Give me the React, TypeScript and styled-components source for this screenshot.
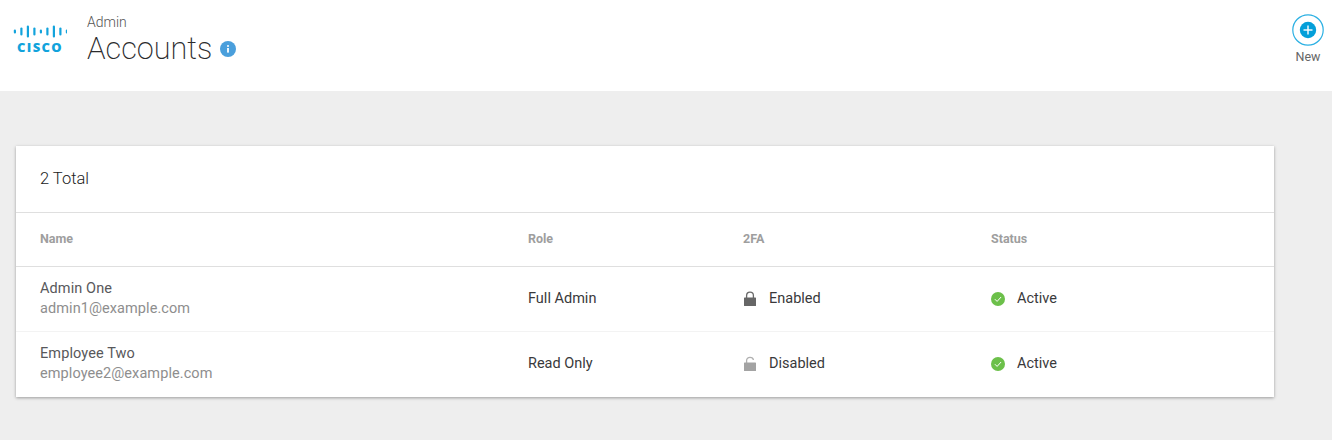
import React from "react";
import styled, { createGlobalStyle } from "styled-components";

const GlobalStyle = createGlobalStyle`
    html, body {
        margin: 0;
        padding: 0;
        background: #eeeeee;
        font-family: Roboto, "Liberation Sans", sans-serif;
        -webkit-font-smoothing: antialiased;
    }
`

type Account = {
    name: string;
    email: string;
    role: string;
    twoFactor: boolean;
}

const accounts: Account[] = [
    { name: "Admin One", email: "admin1@example.com", role: "Full Admin", twoFactor: true },
    { name: "Employee Two", email: "employee2@example.com", role: "Read Only", twoFactor: false },
]

const CiscoLogo = () => (
    <LogoWrapper>
        <svg width="54" height="14" viewBox="0 0 54 14">
            {[4, 8, 12, 8, 4, 8, 12, 8, 4].map((h, i) => (
                <rect key={i} x={0.8 + i * 6.5} y={(13 - h) / 2} width="2.2" height={h} rx="1.1" fill="#12a3dc" />
            ))}
        </svg>
        <LogoText>CISCO</LogoText>
    </LogoWrapper>
)

const InfoIcon = () => (
    <svg width="16" height="16" viewBox="0 0 16 16">
        <circle cx="8" cy="8" r="8" fill="#4a9fdc" />
        <rect x="7.1" y="7" width="1.8" height="4.6" fill="#fff" />
        <circle cx="8" cy="5" r="1" fill="#fff" />
    </svg>
)

const PlusButton = () => (
    <svg width="32" height="32" viewBox="0 0 32 32">
        <circle cx="16" cy="16" r="15.2" fill="#fff" stroke="#2bb0e3" strokeWidth="1.2" />
        <circle cx="16" cy="16" r="8.2" fill="#049fd9" />
        <rect x="15.3" y="11.5" width="1.4" height="9" fill="#fff" />
        <rect x="11.5" y="15.3" width="9" height="1.4" fill="#fff" />
    </svg>
)

const LockIcon = ({ open }: { open: boolean }) => (
    <svg width="14" height="16" viewBox="0 0 14 16">
        {open ? (
            <>
                <path d="M3.6 7V4.4C3.6 2.6 5 1.4 7 1.4s3.2 1 3.4 2.6" fill="none" stroke="#b0b0b0" strokeWidth="1.3" />
                <rect x="1" y="6.5" width="12" height="8.5" rx="0.6" fill="#a3a3a3" />
            </>
        ) : (
            <>
                <path d="M3.6 7V4.6C3.6 2.6 5 1.2 7 1.2s3.4 1.4 3.4 3.4V7" fill="none" stroke="#6a6a6a" strokeWidth="1.3" />
                <rect x="1" y="6.5" width="12" height="8.5" rx="0.6" fill="#666" />
            </>
        )}
    </svg>
)

const CheckIcon = () => (
    <svg width="14" height="14" viewBox="0 0 14 14">
        <circle cx="7" cy="7" r="7" fill="#6cc04a" />
        <path d="M3.9 7.2l2.2 2.2 4-4.4" fill="none" stroke="#fff" strokeWidth="1" />
    </svg>
)

export default function App() {
    return (
        <>
            <GlobalStyle />
            <Page>
                <Header>
                    <CiscoLogo />
                    <Titles>
                        <Breadcrumb>Admin</Breadcrumb>
                        <TitleRow>
                            <Title>Accounts</Title>
                            <InfoIcon />
                        </TitleRow>
                    </Titles>
                    <NewAction>
                        <PlusButton />
                        <NewLabel>New</NewLabel>
                    </NewAction>
                </Header>
                <Card>
                    <CardTitle>2 Total</CardTitle>
                    <HeadRow>
                        <HeadCell>Name</HeadCell>
                        <HeadCell>Role</HeadCell>
                        <HeadCell>2FA</HeadCell>
                        <HeadCell>Status</HeadCell>
                    </HeadRow>
                    {accounts.map((item, i) => (
                        <Row key={i} last={i === accounts.length - 1}>
                            <div>
                                <Name>{item.name}</Name>
                                <Email>{item.email}</Email>
                            </div>
                            <Cell>{item.role}</Cell>
                            <IconCell>
                                <IconSlot><LockIcon open={!item.twoFactor} /></IconSlot>
                                {item.twoFactor ? "Enabled" : "Disabled"}
                            </IconCell>
                            <IconCell>
                                <IconSlot><CheckIcon /></IconSlot>
                                Active
                            </IconCell>
                        </Row>
                    ))}
                </Card>
            </Page>
        </>
    )
}

const Page = styled.div`
    width: 1332px;
    height: 440px;
    overflow: hidden;
    background: #eeeeee;
`

const Header = styled.header`
    display: flex;
    align-items: flex-start;
    height: 91px;
    box-sizing: border-box;
    padding: 14px 8px 0 13px;
    background: #fff;
`

const LogoWrapper = styled.div`
    display: flex;
    flex-direction: column;
    align-items: center;
    width: 54px;
    margin-top: 11px;
`

const LogoText = styled.span`
    margin-top: 1px;
    font-family: "Open Sans", sans-serif;
    font-size: 13px;
    line-height: 15px;
    font-weight: 800;
    letter-spacing: 1.3px;
    color: #12a3dc;
`

const Titles = styled.div`
    display: flex;
    flex-direction: column;
    margin-left: 20px;
    flex: 1;
`

const Breadcrumb = styled.div`
    font-size: 14px;
    line-height: 16px;
    font-weight: 300;
    color: #555;
`

const TitleRow = styled.div`
    display: flex;
    align-items: center;
    gap: 8px;
    margin-top: 1px;
`

const Title = styled.h1`
    margin: 0;
    font-size: 30.6px;
    line-height: 36px;
    font-weight: 200;
    color: #2b2b2d;
`

const NewAction = styled.div`
    display: flex;
    flex-direction: column;
    align-items: center;
    width: 32px;
`

const NewLabel = styled.span`
    margin-top: 4px;
    font-size: 12.5px;
    line-height: 14px;
    color: #666;
`

const Card = styled.section`
    width: 1258px;
    margin: 55px 0 0 16px;
    background: #fff;
    box-shadow: 0 1px 3px rgba(0, 0, 0, 0.35);
`

const CardTitle = styled.div`
    height: 67px;
    box-sizing: border-box;
    padding: 23px 24px 0;
    border-bottom: 1px solid #dfdfdf;
    font-size: 16.5px;
    line-height: 20px;
    font-weight: 300;
    color: #222;
`

const columns = "488px 215px 248px 1fr"

const HeadRow = styled.div`
    display: grid;
    grid-template-columns: ${columns};
    align-items: center;
    height: 54px;
    box-sizing: border-box;
    padding: 0 24px 2px;
    border-bottom: 1px solid #dfdfdf;
`

const HeadCell = styled.div`
    font-size: 12.5px;
    font-weight: 700;
    color: #9e9e9e;
`

const Row = styled.div<{ last: boolean }>`
    display: grid;
    grid-template-columns: ${columns};
    align-items: center;
    height: 65px;
    box-sizing: border-box;
    padding: 0 24px;
    border-bottom: 1px solid ${({ last }) => (last ? "transparent" : "#f3f3f3")};
`

const Name = styled.div`
    font-size: 14.5px;
    line-height: 20px;
    letter-spacing: 0.1px;
    color: #58585b;
`

const Email = styled.div`
    font-size: 14.5px;
    line-height: 20px;
    letter-spacing: 0.08px;
    color: #8e8e8e;
`

const Cell = styled.div`
    font-size: 14.5px;
    line-height: 20px;
    color: #39393b;
`

const IconCell = styled(Cell)`
    display: flex;
    align-items: center;
`

const IconSlot = styled.span`
    display: flex;
    justify-content: center;
    width: 14px;
    margin-right: 12px;
`
